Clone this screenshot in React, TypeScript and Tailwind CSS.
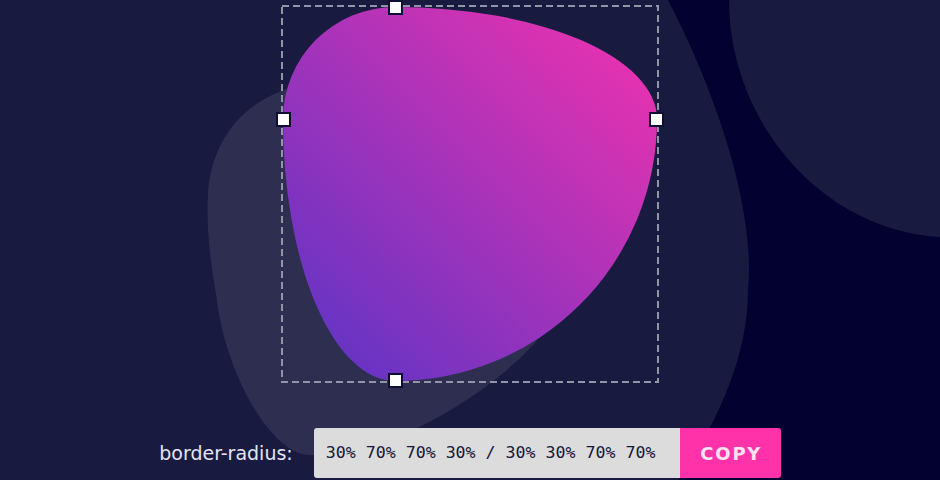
import React from 'react'

const RADIUS = '30% 70% 70% 30% / 30% 30% 70% 70%'

function Handle({ className }: { className: string }) {
  return (
    <div
      className={`absolute h-[15px] w-[15px] border-2 border-[#0e0e34] bg-white ${className}`}
    />
  )
}

function Backdrop() {
  return (
    <svg
      className="absolute inset-0 h-full w-full"
      viewBox="0 0 940 480"
      preserveAspectRatio="none"
    >
      {/* big shape on the left */}
      <path
        d="M0,0 L668,0 C725,110 755,220 748,290 C748,360 715,430 665,500 L0,500 Z"
        fill="#181a40"
      />
      {/* top right blob */}
      <path d="M729,0 C729,120 820,230 940,237 L940,0 Z" fill="#181a40" />
      {/* lighter blob behind the main one */}
      <path
        d="M540,337 C500,385 400,455 310,455 C270,455 225,370 217,300 C211,265 206,230 208,195 C210,150 235,105 290,88 C400,60 560,100 600,200 C610,250 580,290 540,337 Z"
        fill="#2e2f50"
      />
    </svg>
  )
}

export default function App() {
  return (
    <div className="relative h-[480px] w-full overflow-hidden bg-[#020130]">
      <Backdrop />

      <div className="relative flex flex-col items-center pt-[5px]">
        {/* blob with its bounding box */}
        <div className="relative h-[378px] w-[378px] p-[2px]">
          <svg className="absolute inset-0 h-full w-full" viewBox="0 0 378 378">
            <rect
              x="1"
              y="1"
              width="376"
              height="376"
              fill="none"
              stroke="#9494a8"
              strokeWidth="2"
              strokeDasharray="7 4"
            />
          </svg>
          <div
            className="relative h-full w-full bg-[linear-gradient(45deg,#5634c6,#f532ae)]"
            style={{ borderRadius: RADIUS }}
          />
          <Handle className="top-[-5px] left-[107px]" />
          <Handle className="top-[107px] right-[-5px]" />
          <Handle className="top-[107px] left-[-5px]" />
          <Handle className="bottom-[-5px] left-[107px]" />
        </div>

        {/* output row */}
        <div className="mt-[45px] flex h-[50px] items-center">
          <span className="mr-[21px] font-['DejaVu_Sans',sans-serif] text-[19px] text-[#e4e4f2]">
            border-radius:
          </span>
          <div className="flex h-full w-[366px] items-center rounded-l-[3px] bg-[#dcdcdc] pl-3 font-['DejaVu_Sans_Mono',monospace] text-[16.6px] text-[#16163a]">
            {RADIUS}
          </div>
          <button className="flex h-full w-[101px] items-center justify-center rounded-r-[3px] bg-[#ff32a9] pl-[2px] font-['DejaVu_Sans',sans-serif] text-[18px] font-bold tracking-[1.8px] text-[#fde4f1]">
            COPY
          </button>
        </div>
      </div>
    </div>
  )
}
